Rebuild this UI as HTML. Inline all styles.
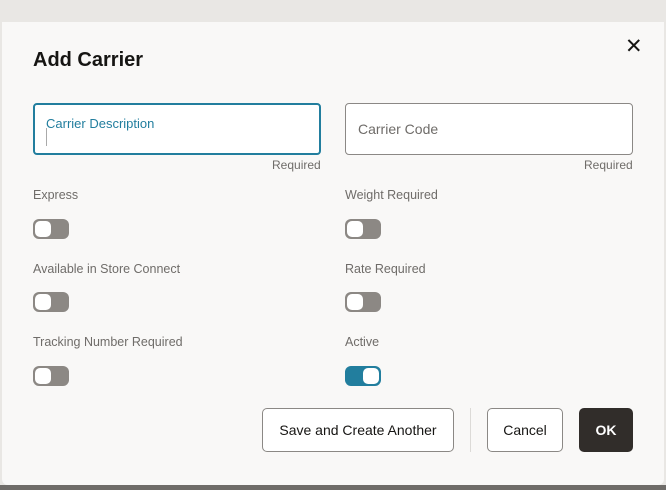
<!DOCTYPE html>
<html><head><style>
body{margin:0;width:666px;height:490px;background:#e9e7e4;font-family:"Liberation Sans",sans-serif;position:relative;overflow:hidden}
.bottom{position:absolute;left:0;right:0;top:485px;height:5px;background:#6f6c69}
.dlg{position:absolute;left:2px;top:22px;width:662px;height:463px;background:#f9f8f7;border-radius:0 0 6px 6px}
.a{position:absolute}
h1{position:absolute;left:33px;top:49px;margin:0;font-size:20px;font-weight:bold;color:#161513}
.x{position:absolute;left:625px;top:34px;font-size:21px;color:#161513;font-weight:300}
.inp{position:absolute;background:#fff;border:1px solid #8b8885;border-radius:4px;box-sizing:border-box}
.lab{font-size:12.5px;color:#6f6c69}
.req{font-size:12px;color:#6f6c69}
.tg{position:absolute;width:36px;height:20px;border-radius:6px;background:#8c8884}
.tg::after{content:"";position:absolute;left:2px;top:2px;width:16px;height:16px;border-radius:5px;background:#fff}
.tg.on{background:#227e9e}
.tg.on::after{left:18px}
.btn{position:absolute;box-sizing:border-box;border:1px solid #8b8885;border-radius:5px;background:#fff;font-size:14px;color:#161513;display:flex;align-items:center;justify-content:center;height:44px;top:408px}
</style></head><body>
<div class="bottom"></div>
<div class="dlg"></div>
<h1>Add Carrier</h1>
<div class="x">✕</div>
<div class="inp" style="left:33px;top:103px;width:288px;height:52px;border:2px solid #227e9e"></div>
<div class="a" style="left:46px;top:116px;font-size:13px;color:#227e9e">Carrier Description</div>
<div class="a" style="left:46px;top:128px;width:1px;height:18px;background:#aaa"></div>
<div class="inp" style="left:345px;top:103px;width:288px;height:52px"></div>
<div class="a" style="left:358px;top:121px;font-size:14px;color:#6f6c69">Carrier Code</div>
<div class="a req" style="left:272px;top:158px">Required</div>
<div class="a req" style="left:584px;top:158px">Required</div>
<div class="a lab" style="left:33px;top:188px">Express</div>
<div class="a lab" style="left:345px;top:188px">Weight Required</div>
<div class="tg" style="left:33px;top:219px"></div>
<div class="tg" style="left:345px;top:219px"></div>
<div class="a lab" style="left:33px;top:262px">Available in Store Connect</div>
<div class="a lab" style="left:345px;top:262px">Rate Required</div>
<div class="tg" style="left:33px;top:292px"></div>
<div class="tg" style="left:345px;top:292px"></div>
<div class="a lab" style="left:33px;top:335px">Tracking Number Required</div>
<div class="a lab" style="left:345px;top:335px">Active</div>
<div class="tg" style="left:33px;top:366px"></div>
<div class="tg on" style="left:345px;top:366px"></div>
<div class="btn" style="left:262px;width:192px">Save and Create Another</div>
<div class="a" style="left:470px;top:408px;width:1px;height:44px;background:#dcdad7"></div>
<div class="btn" style="left:487px;width:76px">Cancel</div>
<div class="btn" style="left:579px;width:54px;background:#312d2a;border-color:#312d2a;color:#fff;font-weight:bold">OK</div>
</body></html>
